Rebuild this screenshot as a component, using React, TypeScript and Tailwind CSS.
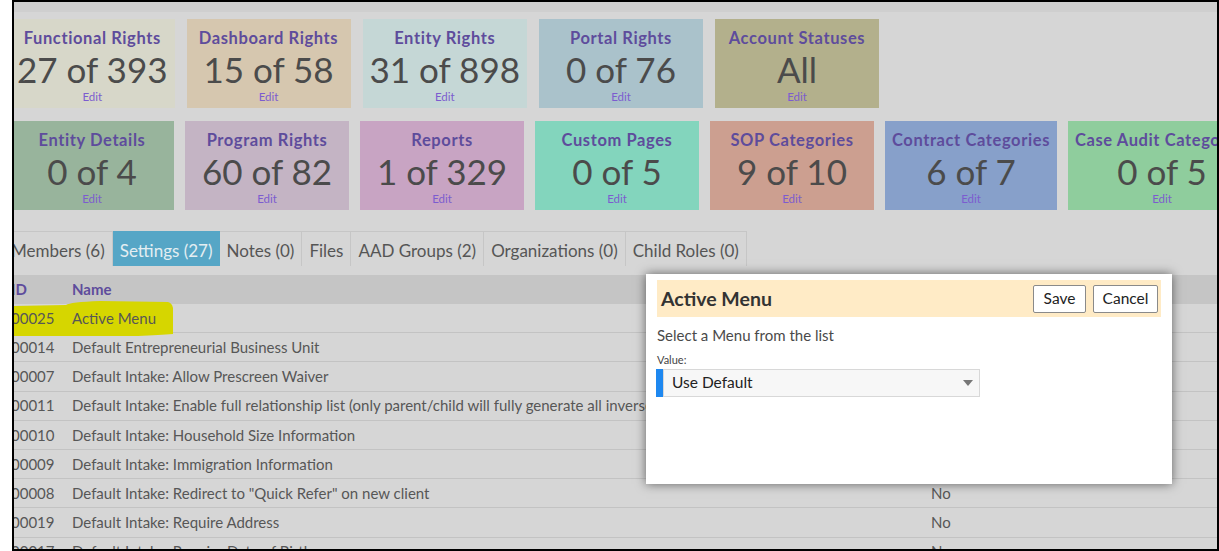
import React from "react";

// Rights summary tiles
const topTiles = [
  { title: "Functional Rights", value: "27 of 393", bg: "bg-[#d7d7c9]" },
  { title: "Dashboard Rights", value: "15 of 58", bg: "bg-[#d6c7af]" },
  { title: "Entity Rights", value: "31 of 898", bg: "bg-[#c5d7d6]" },
  { title: "Portal Rights", value: "0 of 76", bg: "bg-[#aac2cb]" },
  { title: "Account Statuses", value: "All", bg: "bg-[#b3b08c]" },
];

const bottomTiles = [
  { title: "Entity Details", value: "0 of 4", bg: "bg-[#98b49c]" },
  { title: "Program Rights", value: "60 of 82", bg: "bg-[#c4b4c4]" },
  { title: "Reports", value: "1 of 329", bg: "bg-[#c8a4c3]" },
  { title: "Custom Pages", value: "0 of 5", bg: "bg-[#83d5bd]" },
  { title: "SOP Categories", value: "9 of 10", bg: "bg-[#cc9f90]" },
  { title: "Contract Categories", value: "6 of 7", bg: "bg-[#87a0ca]" },
  { title: "Case Audit Categories", value: "0 of 5", bg: "bg-[#8fcd9d]" },
];

const tabs = [
  { label: "Members (6)" },
  { label: "Settings (27)", active: true },
  { label: "Notes (0)" },
  { label: "Files" },
  { label: "AAD Groups (2)" },
  { label: "Organizations (0)" },
  { label: "Child Roles (0)" },
];

const settings = [
  { id: "00025", name: "Active Menu", value: "Use Default" },
  { id: "00014", name: "Default Entrepreneurial Business Unit", value: "" },
  { id: "00007", name: "Default Intake: Allow Prescreen Waiver", value: "No" },
  {
    id: "00011",
    name: "Default Intake: Enable full relationship list (only parent/child will fully generate all inverse relationships)",
    value: "No",
  },
  { id: "00010", name: "Default Intake: Household Size Information", value: "No" },
  { id: "00009", name: "Default Intake: Immigration Information", value: "No" },
  { id: "00008", name: 'Default Intake: Redirect to "Quick Refer" on new client', value: "No" },
  { id: "00019", name: "Default Intake: Require Address", value: "No" },
  { id: "00017", name: "Default Intake: Require Date of Birth", value: "No" },
];

type Tile = { title: string; value: string; bg: string };

const SummaryTile: React.FC<{ tile: Tile }> = ({ tile }) => (
  <div
    className={`${tile.bg} min-w-[164px] shrink-0 px-[7px] pt-[9px] h-[89px] flex flex-col items-center whitespace-nowrap`}
  >
    <div className="text-[16.5px] leading-[20px] font-bold tracking-[0.6px] text-[#5e4c9c]">
      {tile.title}
    </div>
    <div className="text-[35px] leading-[38px] text-[#4b4b4b] mt-[2px]">
      {tile.value}
    </div>
    <div className="text-[11.5px] leading-[14px] text-[#7c5ccf] mt-[2px]">Edit</div>
  </div>
);

export default function App() {
  return (
    <div
      className="w-[1219px] h-[551px] flex bg-white overflow-hidden"
      style={{ fontFamily: "Lato, 'Open Sans', sans-serif" }}
    >
      <div className="w-[12px] shrink-0" />
      <div className="flex-1 relative overflow-hidden border-2 border-black bg-[#d6d6d6]">
        <div className="h-[10px] bg-[#cfcfcf]" />

        <div className="-ml-[4px]">
          {/* Tile rows */}
          <div className="flex gap-3 mt-[7px]">
            {topTiles.map((t) => (
              <SummaryTile key={t.title} tile={t} />
            ))}
          </div>
          <div className="flex gap-[11px] mt-[13px]">
            {bottomTiles.map((t) => (
              <SummaryTile key={t.title} tile={t} />
            ))}
          </div>
        </div>

        {/* Tabs */}
        <div className="flex mt-[21px] -ml-[10px] h-[35px]">
          {tabs.map((tab) => (
            <div
              key={tab.label}
              className={
                tab.active
                  ? "px-[7px] pt-[4px] flex items-center text-[17px] bg-[#56a6c6] text-[#e4eef2] border-t border-[#56a6c6]"
                  : "px-[7px] pt-[4px] flex items-center text-[17px] text-[#555] border-t border-r border-[#c6c6c6]"
              }
            >
              {tab.label}
            </div>
          ))}
        </div>

        {/* Settings table */}
        <div className="mt-[9px] text-[15px] text-[#575757] whitespace-nowrap">
          <div className="flex h-[29px] items-center bg-[#c5c5c5] font-bold text-[#5e4c9c]">
            <div className="w-[58px] -ml-[3px] shrink-0">ID</div>
            <div className="pl-[3px]">Name</div>
          </div>
          {settings.map((row, i) => (
            <div
              key={row.id}
              className="relative flex h-[29.2px] items-center border-b border-[#c3c3c3]"
            >
              {i === 0 && (
                <svg
                  className="absolute -left-[4px] -top-[4px]"
                  width="180"
                  height="40"
                  viewBox="0 0 180 40"
                >
                  <path
                    d="M0 6 L56 5 Q60 2 90 1 L158 2 Q162 3 163 8 L163 34 Q150 35 128 36 L60 36 L0 36 Z"
                    fill="#d6d600"
                  />
                </svg>
              )}
              <div className="relative w-[58px] -ml-[3px] shrink-0">{row.id}</div>
              <div className="relative w-[862px] pl-[3px] shrink-0 overflow-hidden">
                {row.name}
              </div>
              <div className="relative">{row.value}</div>
            </div>
          ))}
        </div>

        {/* Edit dialog */}
        <div className="absolute left-[632px] top-[272px] w-[526px] h-[210px] bg-white shadow-[0_0_10px_rgba(0,0,0,0.55)] px-[11px] pt-[6px]">
          <div className="flex items-center justify-between h-[37px] bg-[#ffebc6] pl-[4px] pr-[3px]">
            <div className="text-[19.5px] font-bold text-[#333]">Active Menu</div>
            <div className="flex gap-[7px]">
              <button className="h-[28px] w-[53px] bg-white border border-[#8a8a8a] rounded-[2px] text-[15.5px] text-[#222]">
                Save
              </button>
              <button className="h-[28px] w-[65px] bg-white border border-[#8a8a8a] rounded-[2px] text-[15.5px] text-[#222]">
                Cancel
              </button>
            </div>
          </div>
          <div className="mt-[7px] text-[15px] leading-[22px] text-[#4a4a4a]">
            Select a Menu from the list
          </div>
          <div className="mt-[7px] text-[11px] leading-[14px] text-[#444]">Value:</div>
          <div className="mt-[2px] flex w-[324px] h-[28px] -ml-[1px]">
            <div className="w-[7px] bg-[#1e88f0]" />
            <div className="flex-1 flex items-center justify-between bg-[#f7f7f7] border border-[#d8d8d8] pl-[8px] pr-[6px]">
              <span className="text-[15.5px] text-[#222]">Use Default</span>
              <svg width="10" height="6" viewBox="0 0 10 6">
                <path d="M0 0 L10 0 L5 6 Z" fill="#777" />
              </svg>
            </div>
          </div>
        </div>
      </div>
    </div>
  );
}
